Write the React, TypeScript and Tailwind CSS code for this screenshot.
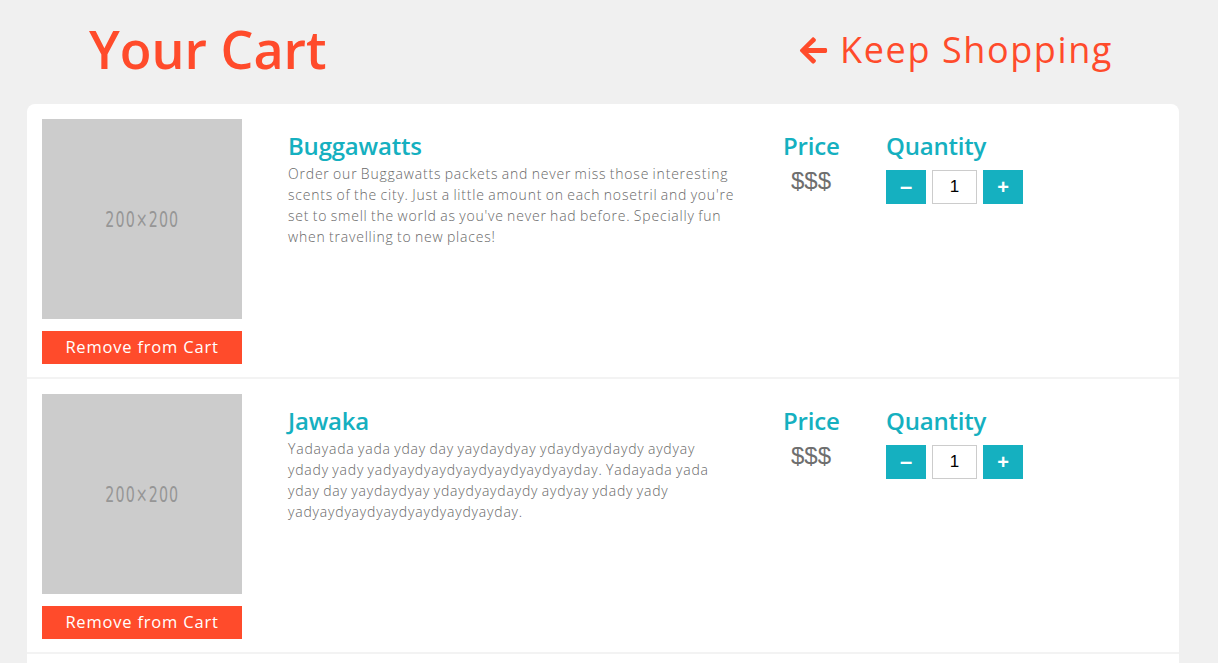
import React from "react";
import { FaArrowLeft } from "react-icons/fa";

const items = [
  {
    name: "Buggawatts",
    desc: "Order our Buggawatts packets and never miss those interesting scents of the city. Just a little amount on each nosetril and you're set to smell the world as you've never had before. Specially fun when travelling to new places!",
  },
  {
    name: "Jawaka",
    desc: "Yadayada yada yday day yaydaydyay ydaydyaydaydy aydyay ydady yady yadyaydyaydyaydyaydyaydyayday. Yadayada yada yday day yaydaydyay ydaydyaydaydy aydyay ydady yady yadyaydyaydyaydyaydyaydyayday.",
  },
];

const sans = '"Open Sans", "Noto Sans", sans-serif';
const arial = '"Liberation Sans", Arial, sans-serif';

function Row({ name, desc }: { name: string; desc: string }) {
  return (
    <div className="flex px-[15px] pt-[15px] pb-[13px] border-b-2 border-[#f3f3f3]">
      <div className="w-[200px] flex flex-col">
        <div className="w-[200px] h-[200px] bg-[#cccccc] flex items-center justify-center">
          <span
            className="text-[#969696] text-[22px] tracking-[1.5px]"
            style={{ fontFamily: '"DejaVu Sans Condensed", "Liberation Sans", sans-serif', transform: "scaleX(0.72)" }}
          >
            200×200
          </span>
        </div>
        <button className="mt-[12px] h-[33px] w-[200px] bg-[#ff4b2b] text-white text-[16.5px] tracking-[0.8px]">
          Remove from Cart
        </button>
      </div>
      <div className="ml-[46px] w-[449px] pt-[12px]">
        <h2 className="text-[24px] font-semibold text-[#15b0c0] leading-[30px] tracking-[-0.2px]">{name}</h2>
        <p className="mt-[2px] text-[14px] text-[#686868] leading-[21px] font-light tracking-[0.8px] [word-spacing:-1px]">{desc}</p>
      </div>
      <div className="ml-[46px] w-[103px] pt-[12px] flex flex-col items-start">
        <div className="text-[24px] font-semibold text-[#15b0c0] leading-[30px] tracking-[-0.2px]">Price</div>
        <div className="ml-[8px] mt-[5px] text-[24px] text-[#6e6e6e] leading-[30px]" style={{ fontFamily: arial }}>$$$</div>
      </div>
      <div className="pt-[12px]">
        <div className="text-[24px] font-semibold text-[#15b0c0] leading-[30px] tracking-[-0.2px]">Quantity</div>
        <div className="flex mt-[9px] gap-[6px]">
          <button className="w-[40px] h-[34px] bg-[#15b0c0] text-white text-[22px] font-bold leading-none flex items-center justify-center" style={{ fontFamily: arial }}>–</button>
          <div className="w-[45px] h-[34px] border border-[#cccccc] bg-white flex items-center justify-center text-[17px] text-black" style={{ fontFamily: arial }}>1</div>
          <button className="w-[40px] h-[34px] bg-[#15b0c0] text-white text-[20px] font-bold leading-none flex items-center justify-center" style={{ fontFamily: arial }}>+</button>
        </div>
      </div>
    </div>
  );
}

export default function App() {
  return (
    <div className="min-h-[663px] bg-[#f0f0f0]" style={{ fontFamily: sans }}>
      <div className="flex items-center justify-between pl-[89px] pr-[105px] h-[104px] pb-[6px]">
        <h1 className="text-[52px] font-semibold text-[#ff4b2b] tracking-[0px]">Your Cart</h1>
        <a className="flex items-center gap-[11px] text-[#ff4b2b] text-[36px] tracking-[1.6px] mt-[2px]">
          <FaArrowLeft className="w-[31px] h-[31px]" />
          <span>Keep Shopping</span>
        </a>
      </div>
      <div className="mx-[27px] w-[1152px] bg-white rounded-t-[8px]">
        {items.map((it) => (
          <Row key={it.name} {...it} />
        ))}
        <div className="h-[40px]" />
      </div>
    </div>
  );
}
